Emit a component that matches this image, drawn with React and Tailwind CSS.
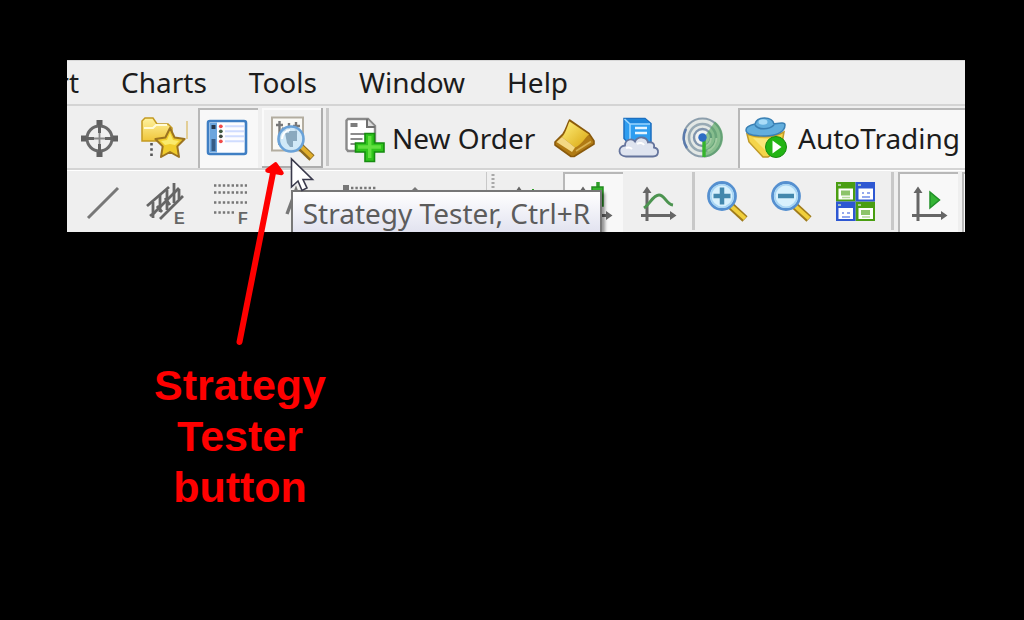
import clsx from 'clsx';

const menus = ['Charts', 'Tools', 'Window', 'Help'];

function Icon({ children }) {
  return (
    <svg className="h-12 w-12 shrink-0 overflow-visible" viewBox="0 0 48 48" fill="none" aria-hidden="true">
      {children}
    </svg>
  );
}

function ToolButton({ label, state, className = 'w-16', children }) {
  return (
    <button
      type="button"
      aria-label={label}
      className={clsx(
        'flex h-[60px] shrink-0 items-center justify-center',
        state === 'pressed' && 'bg-[#f8f8f8] shadow-[inset_2px_2px_#b8b8b8]',
        state === 'raised' && 'bg-[#f1f1f1] shadow-[inset_-2px_-2px_#adadad,inset_2px_2px_#fafafa]',
        className
      )}
    >
      {children}
    </button>
  );
}

function Separator({ className }) {
  return <div className={clsx('h-[58px] shrink-0 bg-[#c8c8c8]', className)} />;
}

function CrosshairIcon() {
  return (
    <Icon>
      <circle cx="24.5" cy="24.5" r="12.500" stroke="#6a6a6a" strokeWidth="3" />
      <path d="M24.5 6v13M24.5 30v13M6 24.5h13M30 24.5h13" stroke="#636363" strokeWidth="3" />
      <path d="M24.5 6v5M24.5 38v5M6 24.5h5M38 24.5h5" stroke="#606060" strokeWidth="6" />
      <path d="M24.5 19v11M19 24.5h11" stroke="#888" strokeWidth="1.800" />
    </Icon>
  );
}

function FavoritesIcon() {
  return (
    <Icon>
      <defs>
        <linearGradient id="folder" x1="0" y1="0" x2="0" y2="1">
          <stop offset="0" stopColor="#fff3a0" />
          <stop offset="1" stopColor="#efc53a" />
        </linearGradient>
      </defs>
      <path d="M3 27V7l3-3h8l4 6h11l4 4v13z" fill="url(#folder)" stroke="#c49a22" strokeWidth="1.5" />
      <path d="M5 14h9l3-3h11" stroke="#fffbd8" strokeWidth="2" />
      <path d="M12.5 29v14" stroke="#555" strokeWidth="2.6" strokeDasharray="2.6 2.6" />
      <path
        d="M31 14l4.600 9.500 10 1.500-7.300 7.400 1.700 10.600-9-5-9 5 1.700-10.600-7.300-7.400 10-1.500z"
        fill="#f0cc2c"
        stroke="#9c7420"
        strokeWidth="2"
        strokeLinejoin="round"
      />
      <path d="M31 19l3 7 6 1-4 4-5-1-5 1-4-4 6-1z" fill="#faea6c" />
      <path d="M48 7v18" stroke="#d9b75c" strokeWidth="1.2" />
    </Icon>
  );
}

function TerminalIcon() {
  return (
    <Icon>
      <rect x="4" y="7" width="38" height="33" rx="2" fill="#fdfdff" stroke="#3f7fc4" strokeWidth="2.6" />
      <path d="M5.500 8.500h7.500v30H5.500z" fill="#6ba5de" />
      <path d="M7.500 11h4v4h-4z" fill="#26364a" />
      <path d="M7.500 25h4v12h-4z" fill="#355b86" />
      <path d="M21 12.300h19M21 17.300h19M21 22.300h19M21 27.300h19" stroke="#cfdcff" strokeWidth="2" />
      <circle cx="16.800" cy="12.300" r="1.900" fill="#f04a4a" />
      <circle cx="16.800" cy="17.300" r="1.900" fill="#3f5a40" />
      <circle cx="16.800" cy="22.300" r="1.900" fill="#3f4a40" />
      <circle cx="16.800" cy="27.300" r="1.900" fill="#f04a4a" />
    </Icon>
  );
}

function TesterIcon() {
  return (
    <Icon>
      <rect x="3" y="3.500" width="31" height="33" fill="#fbfaf6" stroke="#b3ada0" strokeWidth="2" />
      <path d="M10.500 7v24M7 11h7M20 9v7M27 8v12M24 12h7M13 14l7 6" stroke="#777" strokeWidth="2.400" />
      <path d="M31.500 33L43 44" stroke="#8c6a20" strokeWidth="7.500" />
      <path d="M31.500 32L43 43" stroke="#e0ae2c" strokeWidth="4" />
      <circle cx="22" cy="25" r="12.500" fill="#c9e5f8" fillOpacity=".85" stroke="#6aa2d8" strokeWidth="2.600" />
      <path d="M16 19h4v-2h8v10h-4v6h-3l-3-4z" fill="#8aa9bf" />
      <path d="M13 25a9 9 0 0 1 8-9" stroke="#fff" strokeWidth="2" />
    </Icon>
  );
}

function NewOrderIcon() {
  return (
    <Icon>
      <path d="M8 5h20l7 7v25H8L6.500 35V6.500z" fill="#fff" stroke="#8a8a8a" strokeWidth="2.400" />
      <path d="M27 5v8h8" fill="#ddd" stroke="#707070" strokeWidth="2" />
      <path d="M10.500 11h7" stroke="#7c7c7c" strokeWidth="4" />
      <path d="M10.500 20h17M10.500 25h12M10.500 30h7" stroke="#8c8c8c" strokeWidth="2" />
      <path
        d="M25 19.500h9.500V29h9.500v9h-9.500v9.500H25V38h-9.500v-9H25z"
        fill="#2fc51c"
        stroke="#168c10"
        strokeWidth="1.600"
      />
      <path d="M29.700 22v22M18 33h23" stroke="#62e040" strokeWidth="3.500" />
    </Icon>
  );
}

function BookIcon() {
  return (
    <Icon>
      <defs>
        <linearGradient id="book" x1="0" y1="0" x2="1" y2="1">
          <stop offset="0" stopColor="#fff07c" />
          <stop offset="1" stopColor="#d9a50e" />
        </linearGradient>
      </defs>
      <path
        d="M18.500 6L38 19.500l5 7.500v3L23 42.500h-3L4 31v-3l8-8c3-4 4-9 6.500-14z"
        fill="#b07a14"
        stroke="#8a5a0c"
        strokeWidth="1.600"
        strokeLinejoin="round"
      />
      <path d="M18.500 7.500L38 20.500c-4 3-8 11-14 13L11 23c4-4 5-10 7.500-15.500z" fill="url(#book)" />
      <path d="M11 23l13 10.500-3 4.500L5.500 28z" fill="#f3d884" />
      <path d="M25 37l15-9.500" stroke="#d8b050" strokeWidth="1.600" />
    </Icon>
  );
}

function CloudIcon() {
  return (
    <Icon>
      <path d="M9 4.500h21l6 5v20H14l-5-5z" fill="#2e9df0" stroke="#1c6fc0" strokeWidth="1.500" />
      <path d="M9.500 5h20l5.500 5H15z" fill="#1e86dc" />
      <path d="M15 10v16M9.500 5L15 10h20" stroke="#9bd6ff" strokeWidth="1.600" />
      <path d="M20 14h12M20 19h12" stroke="#e5f5ff" strokeWidth="2.400" />
      <path
        d="M11 42.500c-8 0-9-10-1-11 0-6 7-8 10-4 3-6 12-5 13 1 4-1 7 1 6 5 6 1 5 9-1 9z"
        fill="#dfe4ef"
        stroke="#65749c"
        strokeWidth="1.800"
      />
      <path d="M11 34c3-1 5 0 6 1M22 30c3-2 6-1 7 1" stroke="#fff" strokeWidth="2" />
    </Icon>
  );
}

function SignalIcon() {
  return (
    <Icon>
      <circle cx="23.500" cy="23.500" r="19" fill="#e3e8e5" stroke="#8c9eac" strokeWidth="2" />
      <circle cx="23.500" cy="23.500" r="13.500" stroke="#98aab4" strokeWidth="2.600" />
      <circle cx="23.500" cy="23.500" r="8.500" fill="#f0f2f2" stroke="#8195ad" strokeWidth="2.400" />
      <path d="M36 7.500a20 20 0 0 1-11 36v-20z" fill="#4aa254" fillOpacity=".6" />
      <path d="M7 15a19 19 0 0 0 1 19" stroke="#5a7aac" strokeWidth="2.400" />
      <path d="M32 24a9 9 0 0 1-5 8M37.500 24a14 14 0 0 1-9 13" stroke="#a0cba0" strokeWidth="2" />
      <path d="M25 25v18" stroke="#35b52d" strokeWidth="3.400" />
      <circle cx="23.500" cy="23.500" r="4.200" fill="#2e6cc4" />
    </Icon>
  );
}

function AutoTradingIcon() {
  return (
    <Icon>
      <path d="M5 20c10 4 26 4 37-2l-3 17-13 8h-5L7 28z" fill="#f5d54a" stroke="#c09a28" strokeWidth="1.500" />
      <path d="M11 24l20 1-5 14" fill="#f9e678" />
      <path
        d="M4 16c0-3 4-5 9-6 2-8 17-8 19 0 6-1 11-2 11 1 0 7-9 11-20 11C11 22 4 20 4 16z"
        fill="#62aedd"
        stroke="#3a80b4"
        strokeWidth="1.500"
      />
      <path d="M13 11c3 5 14 5 19 0" stroke="#3a80b4" strokeWidth="1.600" />
      <ellipse cx="21" cy="8" rx="4.500" ry="2.800" fill="#a9dcf8" />
      <circle cx="34" cy="33" r="10.500" fill="#22b414" stroke="#178a10" strokeWidth="1" />
      <path d="M30.500 26.500l9 6.500-9 6.500z" fill="#fff" />
    </Icon>
  );
}

// Shared axes of the chart buttons
function Axes() {
  return (
    <>
      <path d="M14 12v31M8 37.500h32" stroke="#666" strokeWidth="3" />
      <path d="M9.500 15l4.500-6.500 4.500 6.500zM37 33l6.500 4.500-6.500 4.500z" fill="#666" />
    </>
  );
}

function Lens({ minus }) {
  return (
    <Icon>
      <path d="M28 28l14 13" stroke="#a07c1c" strokeWidth="7.500" />
      <path d="M28 28l14 12.500" stroke="#f0cf3c" strokeWidth="4" />
      <circle cx="19" cy="18" r="13.500" fill="#d8f1fd" stroke="#5590d0" strokeWidth="2.800" />
      <circle cx="19" cy="18" r="11.200" stroke="#a8d6f4" strokeWidth="1.600" />
      <path d={minus ? 'M11 18h16' : 'M10.500 18h17M19 9.500v17'} stroke="#4388ad" strokeWidth="4.500" />
    </Icon>
  );
}

function TileIcon() {
  return (
    <Icon>
      <path d="M5 4h19.500v19.500H5zM24.500 23.500h19.500v19.500H24.500z" fill="#4a9e12" />
      <path d="M24.500 4h19.500v19.500H24.500zM5 23.500h19.500v19.500H5z" fill="#2e58d2" />
      <path d="M7.500 10.500h14.500v11H7.500zM27.500 10.500h14.500v11H27.500zM7.500 30h14.500v11H7.500zM27.500 30h14.500v11H27.500z" fill="#fff" />
      <path d="M10 12.500h9v5h-9zM30 32h9v5h-9z" fill="#8cc46a" />
      <path d="M11 19.500h8M31 39h8" stroke="#b6dc9c" strokeWidth="1.500" />
      <path d="M31 15h2M36 15h3M11 35h2M16 35h3M31 19h8M11 39h8" stroke="#94a9ee" strokeWidth="2" />
      <path d="M7 7h3M27 7h3M7 27h3M27 27h3" stroke="#c4dcc0" strokeWidth="1.500" />
    </Icon>
  );
}

function MenuBar() {
  return (
    <nav className="flex h-[46px] gap-[42px] border-t border-b-2 border-t-[#d8d8d8] border-b-[#d4d4d4] leading-[42px]">
      <button type="button" className="flex w-3 shrink-0 justify-end overflow-hidden">
        rt
      </button>
      {menus.map((name) => (
        <button type="button" key={name} className="flex shrink-0">
          {name}
        </button>
      ))}
    </nav>
  );
}

function StandardToolbar() {
  return (
    <div className="flex border-b-2 border-[#d4d4d4] pt-0.5">
      <ToolButton label="Crosshair"><CrosshairIcon /></ToolButton>
      <ToolButton label="Favorites"><FavoritesIcon /></ToolButton>
      <ToolButton label="Terminal" state="pressed" className="ml-[3px] w-[60px]"><TerminalIcon /></ToolButton>
      <ToolButton label="Strategy Tester" state="raised" className="ml-1 w-[61px]"><TesterIcon /></ToolButton>
      <Separator className="ml-[3px] w-[3px]" />
      <ToolButton className="ml-[11px] w-[203px] gap-1 whitespace-nowrap">
        <NewOrderIcon />
        <span className="flex-1 text-left">New Order</span>
      </ToolButton>
      <ToolButton label="MetaEditor"><BookIcon /></ToolButton>
      <ToolButton label="Hosting"><CloudIcon /></ToolButton>
      <ToolButton label="Signals"><SignalIcon /></ToolButton>
      <ToolButton state="pressed" className="ml-[3px] flex-1 gap-2 pl-1">
        <AutoTradingIcon />
        <span className="flex-1 text-left">AutoTrading</span>
      </ToolButton>
    </div>
  );
}

function ChartToolbar() {
  return (
    <div className="flex h-[62px] overflow-hidden border-t border-white pt-px pl-1">
      <ToolButton label="Trendline">
        <Icon>
          <path d="M9 40L39 10" stroke="#777" strokeWidth="3" />
        </Icon>
      </ToolButton>
      <ToolButton label="Equidistant Channel">
        <Icon>
          <path d="M4 28L26 9M17 41L40 18M10 36L36 10" stroke="#666" strokeWidth="2.800" />
          <path d="M10 24v16M17 17v17M24 12v20M31 5v20M7 38l5-4M36 11v10M14 28l5 6M22 20l5 7" stroke="#666" strokeWidth="2.800" />
          <text x="31" y="46" fill="#666" className="font-['Liberation_Sans'] text-base font-bold">E</text>
        </Icon>
      </ToolButton>
      <ToolButton label="Fibonacci Retracement">
        <Icon>
          <path d="M7 7.500h33M7 14.500h33M7 24.500h33M7 34.500h22" stroke="#777" strokeWidth="2.400" strokeDasharray="2.400 2" />
          <text x="31" y="46" fill="#666" className="font-['Liberation_Sans'] text-base font-bold">F</text>
        </Icon>
      </ToolButton>
      <ToolButton label="Text">
        <Icon>
          <path d="M16 36l9-24 9 24M19 28h12" stroke="#777" strokeWidth="3.400" />
        </Icon>
      </ToolButton>
      <ToolButton label="Text Label">
        <Icon>
          <path d="M8 7h6v5H8z" fill="#777" />
          <path d="M16 10h25" stroke="#777" strokeWidth="2.400" strokeDasharray="2.400 2" />
        </Icon>
      </ToolButton>
      <ToolButton label="Arrows">
        <Icon>
          <path d="M11 14l5-5 5 5z" fill="#777" />
        </Icon>
      </ToolButton>
      <Separator className="ml-[31px] w-px" />
      <svg className="ml-1 h-[58px] w-1 shrink-0" viewBox="0 0 4 58" aria-hidden="true">
        <path d="M2 2v56" stroke="#a8a8a8" strokeWidth="3" strokeDasharray="2 2" />
      </svg>
      <ToolButton label="Bar Chart" className="ml-0.5 w-16">
        <Icon>
          <Axes />
          <path d="M28 11v20" stroke="#2f9e2a" strokeWidth="2" />
        </Icon>
      </ToolButton>
      <ToolButton label="Candlesticks" state="pressed" className="ml-0.5 w-[60px]">
        <Icon>
          <Axes />
          <path d="M29 4v30" stroke="#2f9e2a" strokeWidth="3.500" />
          <path d="M23 9h11v19H23z" fill="#35b52d" stroke="#248a20" strokeWidth="1.500" />
        </Icon>
      </ToolButton>
      <ToolButton label="Line Chart" className="ml-0.5 w-16">
        <Icon>
          <Axes />
          <path d="M11 30c6-4 9-13 15-13s7 9 14 10" stroke="#4c9450" strokeWidth="3" />
        </Icon>
      </ToolButton>
      <Separator className="ml-[3px] w-[3px]" />
      <ToolButton label="Zoom In"><Lens /></ToolButton>
      <ToolButton label="Zoom Out"><Lens minus /></ToolButton>
      <ToolButton label="Tile Windows"><TileIcon /></ToolButton>
      <Separator className="ml-1 w-[3px]" />
      <ToolButton label="Auto Scroll" state="pressed" className="ml-1 w-[60px]">
        <Icon>
          <Axes />
          <path d="M26 14l9.500 8-9.500 8z" fill="#35b535" stroke="#209028" strokeWidth="1.500" />
        </Icon>
      </ToolButton>
      <ToolButton label="Chart Shift" state="pressed" className="ml-1 w-[60px]" />
    </div>
  );
}

export default function App() {
  return (
    <main className="min-h-screen bg-black pt-[60px] pr-[59px] pl-[67px]">
      <div className="relative">
        <div className="relative overflow-hidden bg-[#efefef] font-['Noto_Sans',sans-serif] text-[28px] text-[#1c1c1c]">
          <MenuBar />
          <StandardToolbar />
          <ChartToolbar />
          <div
            role="tooltip"
            className="absolute top-[130px] left-[224px] h-12 w-[311px] border-2 border-[#777] bg-linear-to-b from-white to-[#dfe0ee] text-center leading-[42px] whitespace-nowrap text-[#5c5c5c] shadow-[3px_3px_3px_#0006]"
          >
            Strategy Tester, Ctrl+R
          </div>
          <svg className="absolute top-[97px] left-[223px] h-9 w-7" viewBox="0 0 28 36" aria-hidden="true">
            <path d="M1.500 2v28l6.500-6 4 9.500 5-2.500-4-8.500h9.500z" fill="#fff" stroke="#3a3a4c" strokeWidth="1.600" />
          </svg>
        </div>
        {/* Arrow from the caption up to the button */}
        <svg className="absolute top-[100px] left-[167px] h-[190px] w-[52px]" viewBox="0 0 52 190" aria-hidden="true">
          <path d="M5.500 182L39 13" stroke="#f00" strokeWidth="6" strokeLinecap="round" />
          <path d="M41.500 4.500l6 8.500-14-2.500z" fill="#f00" stroke="#f00" strokeWidth="4.500" strokeLinejoin="round" />
        </svg>
      </div>
      <p className="mt-[128px] ml-[73px] w-[200px] text-center font-['Liberation_Sans',sans-serif] text-[43px] leading-[51px] font-bold text-[#f00]">
        Strategy Tester button
      </p>
    </main>
  );
}
